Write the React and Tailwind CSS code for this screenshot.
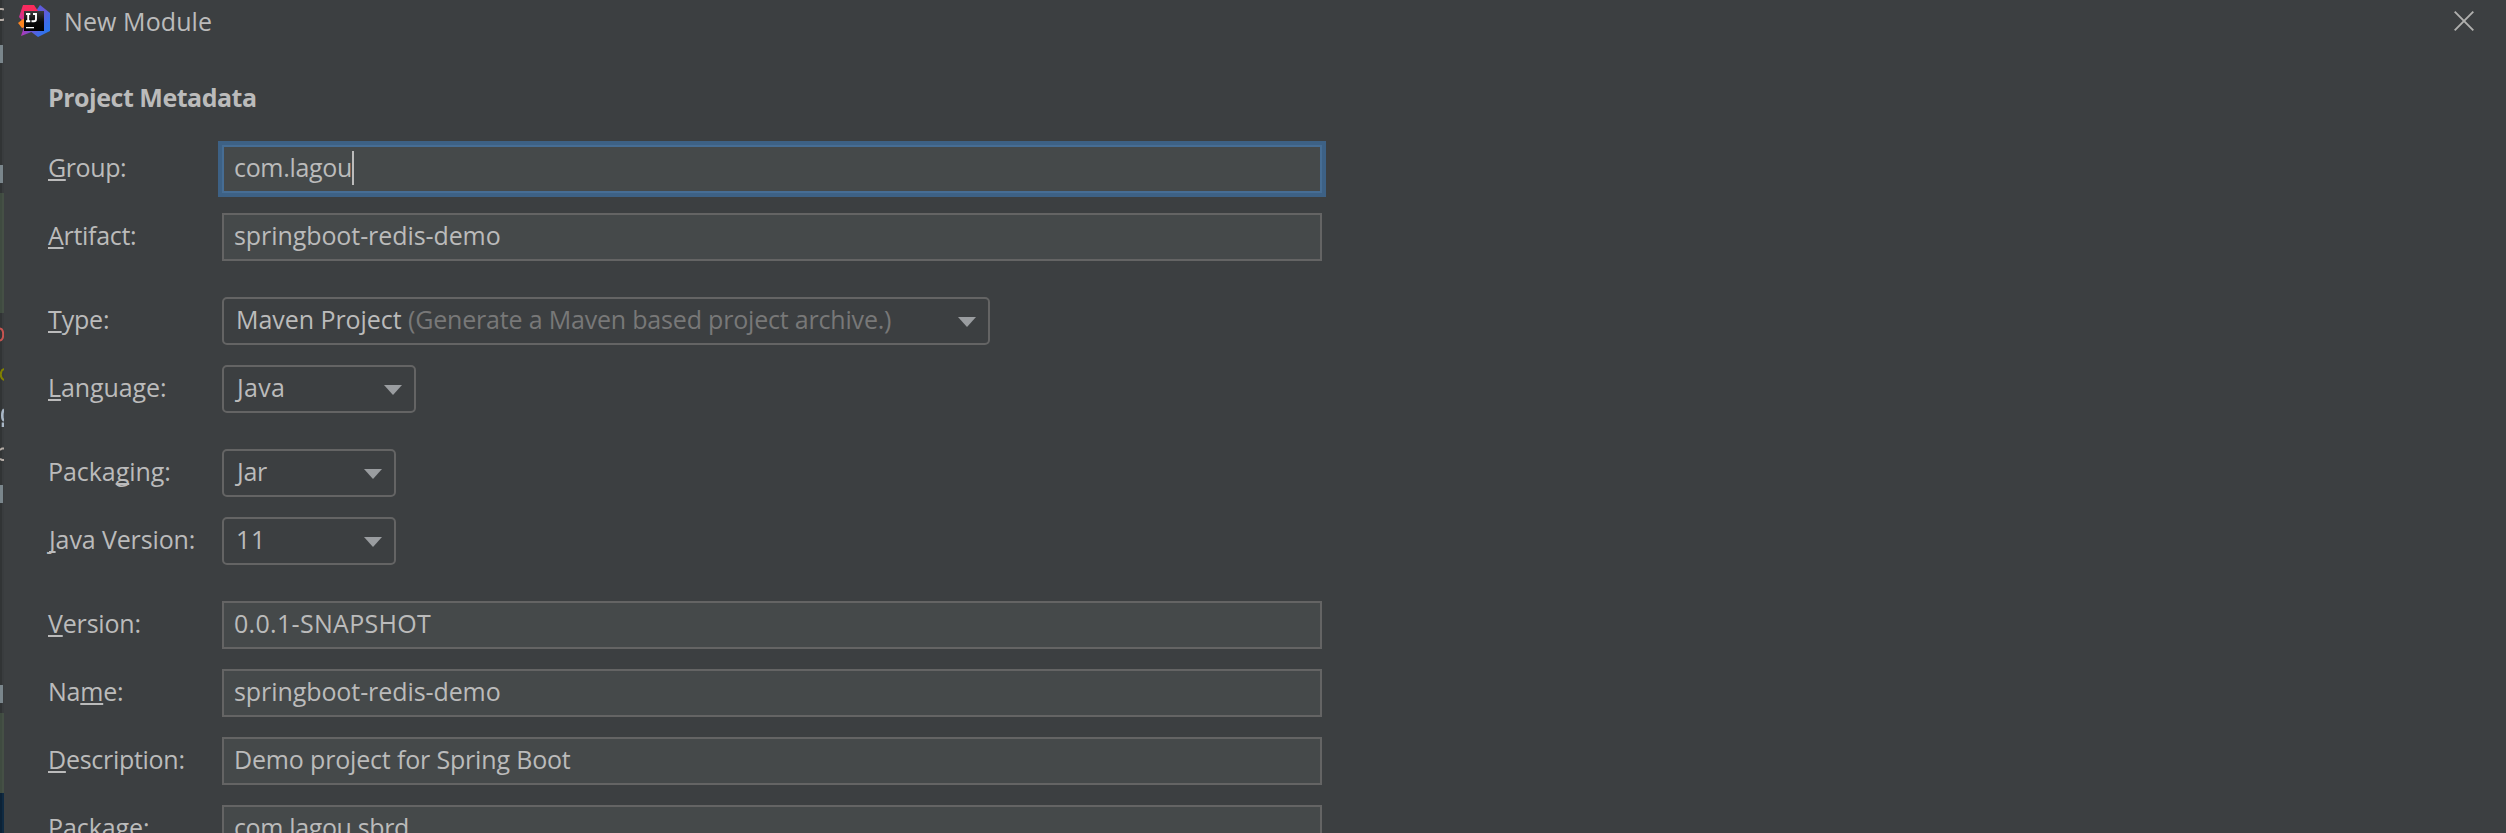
import React from "react";

function Mnemonic({ children, className = "" }) {
  return (
    <span
      className={`underline decoration-[#bbbbbb] decoration-2 underline-offset-[2px] [text-decoration-skip-ink:none] ${className}`}
    >
      {children}
    </span>
  );
}

function Row({ label, children, className = "" }) {
  return (
    <div className={`flex h-12 items-start ${className}`}>
      <label className="w-[174px] shrink-0 leading-[44px]">{label}</label>
      {children}
    </div>
  );
}

function TextField({ children, className = "" }) {
  return (
    <div
      className={`h-12 w-[1100px] border-2 border-[#646464] bg-[#45494a] pl-[10px] leading-[40px] ${className}`}
    >
      {children}
    </div>
  );
}

function FocusedField({ children, className = "" }) {
  return (
    <div
      className={`flex h-12 w-[1100px] border-2 border-[#466d94] bg-[#45494a] pl-[10px] leading-[40px] shadow-[0_0_0_4px_#3d6185] ${className}`}
    >
      {children}
      <span className="mt-1 h-[34px] w-[2px] bg-[#bbbbbb]" />
    </div>
  );
}

function Select({ children, className = "" }) {
  return (
    <div
      className={`flex h-12 items-start justify-between rounded-[5px] border-2 border-[#646464] pl-3 pr-3 leading-[40px] ${className}`}
    >
      <span>{children}</span>
      <svg width="18" height="10" viewBox="0 0 18 10" className="mt-[18px] shrink-0">
        <path d="M0 0H18L9 10Z" fill="#9a9da0" />
      </svg>
    </div>
  );
}

function EditorEdge() {
  return (
    <svg width="4" height="833" viewBox="0 0 4 833" className="shrink-0">
      <rect width="2" height="833" fill="#313435" />
      <rect x="2" width="2" height="833" fill="#393c3e" />
      <path d="M0 9H2Q3.500 9 4 10M0 20H3L4 19" stroke="#b4aca6" strokeWidth="2" fill="none" />
      <rect y="45" width="3" height="18" fill="#7a868c" />
      <rect y="165" width="3" height="18" fill="#7a868c" />
      <rect y="193" width="2" height="120" fill="#3f4b40" />
      <rect x="2" y="193" width="2" height="120" fill="#455045" />
      <path d="M0 328.500Q3.200 329 3.200 334.500T0 340.500" stroke="#c75450" strokeWidth="2" fill="none" />
      <path d="M4 369Q.8 370 .8 374.500T4 380" stroke="#808000" strokeWidth="2" fill="none" />
      <path d="M4 409.500Q2.300 411 2.300 415.500T4 420.500M3 422.500V427" stroke="#a9b7c6" strokeWidth="2.600" fill="none" />
      <path d="M0 450L2 448.500H4M0 459L2 460H4" stroke="#b4aca6" strokeWidth="2" fill="none" />
      <rect y="485" width="3" height="18" fill="#7a868c" />
      <rect y="685" width="3" height="18" fill="#7a868c" />
      <rect y="713" width="2" height="80" fill="#3f4b40" />
      <rect x="2" y="713" width="2" height="80" fill="#455045" />
      <rect y="793" width="2" height="40" fill="#0c2236" />
      <rect x="2" y="793" width="2" height="40" fill="#0f2a42" />
    </svg>
  );
}

function IdeaLogo() {
  return (
    <svg width="32" height="32" viewBox="0 0 32 32" className="shrink-0">
      <defs>
        <linearGradient id="blue" x1="0" y1="0" x2="1" y2="1">
          <stop offset="0" stopColor="#3b6be8" />
          <stop offset=".45" stopColor="#6a57d6" />
          <stop offset=".7" stopColor="#3a6de8" />
          <stop offset="1" stopColor="#1f7cf0" />
        </linearGradient>
        <linearGradient id="pink" x1="0" y1="1" x2="1" y2="0">
          <stop offset="0" stopColor="#a83bc0" />
          <stop offset=".5" stopColor="#f52a63" />
          <stop offset="1" stopColor="#fe2c55" />
        </linearGradient>
        <linearGradient id="purple" x1="0" y1="0" x2="1" y2="0">
          <stop offset="0" stopColor="#b336b4" />
          <stop offset="1" stopColor="#5a5be0" />
        </linearGradient>
        <linearGradient id="tile" x1="0" y1="0" x2="0" y2="1">
          <stop offset="0" stopColor="#3a3a3a" />
          <stop offset=".55" stopColor="#080808" />
          <stop offset="1" stopColor="#000000" />
        </linearGradient>
      </defs>
      <path d="M22 0L32 8V26L20 32L12 26L18 6Z" fill="url(#blue)" />
      <path d="M5 0H16L20 6L8 20L1 12Z" fill="url(#pink)" />
      <path d="M5 14L0 18L4 23L8 22V14Z" fill="#fb8420" />
      <path d="M6 22L3 31L16 26V22Z" fill="url(#purple)" />
      <rect x="6" y="6" width="20" height="20" fill="url(#tile)" />
      <path d="M8 9H12.300M10.200 8V17M8 16.300H12.300M15 9H18V14Q18 16.300 16 16.300H13.500" stroke="#fff" strokeWidth="1.900" fill="none" />
      <rect x="8" y="22" width="8" height="1.300" fill="#fff" />
    </svg>
  );
}

export default function App() {
  return (
    <div className="flex h-[833px] w-[2506px] overflow-hidden whitespace-pre bg-[#3c3f41] font-['Open_Sans','Noto_Sans',sans-serif] text-[25px] text-[#bbbbbb]">
      <EditorEdge />
      <div className="flex grow flex-col">
        <header className="flex h-[42px] items-start pl-[14px] pr-[32px]">
          <div className="mt-[5px] flex">
            <IdeaLogo />
          </div>
          <h1 className="ml-[14px] tracking-[0.090px] leading-[42px]">New Module</h1>
          <svg width="20" height="20" viewBox="0 0 20 20" className="ml-auto mt-[11px]">
            <path d="M.7 .7L19.300 19.300M19.300 .7L.7 19.300" stroke="#b0b0ae" strokeWidth="1.900" />
          </svg>
        </header>
        <main className="flex flex-col pl-[44px]">
          <h2 className="mt-[33px] h-[70px] font-bold leading-[44px] tracking-[-0.480px]">Project Metadata</h2>
          <div className="flex flex-col gap-9">
            <section className="flex flex-col gap-5">
              <Row className="tracking-[-0.410px]" label={<><Mnemonic>G</Mnemonic>roup:</>}>
                <FocusedField className="tracking-[-0.320px]">com.lagou</FocusedField>
              </Row>
              <Row className="tracking-[-0.300px]" label={<><Mnemonic>A</Mnemonic>rtifact:</>}>
                <TextField className="tracking-[-0.080px]">springboot-redis-demo</TextField>
              </Row>
            </section>
            <section className="flex flex-col gap-5">
              <Row className="tracking-[-0.160px]" label={<><Mnemonic>T</Mnemonic>ype:</>}>
                <Select className="w-[768px]">
                  <span className="tracking-[-0.050px]">Maven Project </span>
                  <span className="tracking-[-0.190px] text-[#787878]">(Generate a Maven based project archive.)</span>
                </Select>
              </Row>
              <Row className="tracking-[-0.090px]" label={<><Mnemonic>L</Mnemonic>anguage:</>}>
                <Select className="w-[194px] tracking-[0.300px]"><span className="pl-[1px]">Java</span></Select>
              </Row>
            </section>
            <section className="flex flex-col gap-5">
              <Row className="tracking-[-0.050px]" label={<>Packa<Mnemonic>g</Mnemonic>ing:</>}>
                <Select className="w-[174px] tracking-[-0.300px]"><span className="pl-[1px]">Jar</span></Select>
              </Row>
              <Row className="tracking-[-0.120px]" label={<span className="pl-[1px]"><Mnemonic>J</Mnemonic>ava Version:</span>}>
                <Select className="w-[174px] tracking-[0.700px]">11</Select>
              </Row>
            </section>
            <section className="flex flex-col gap-5">
              <Row className="tracking-[-0.180px]" label={<><Mnemonic>V</Mnemonic>ersion:</>}>
                <TextField className="tracking-[0.310px]">0.0.1-SNAPSHOT</TextField>
              </Row>
              <Row className="tracking-[-0.220px]" label={<>Na<Mnemonic>m</Mnemonic>e:</>}>
                <TextField className="tracking-[-0.080px]">springboot-redis-demo</TextField>
              </Row>
              <Row className="tracking-[-0.280px]" label={<><Mnemonic>D</Mnemonic>escription:</>}>
                <TextField className="tracking-[-0.170px]">Demo project for Spring Boot</TextField>
              </Row>
              <Row className="tracking-[-0.080px]" label={<>Pac<Mnemonic>k</Mnemonic>age:</>}>
                <TextField className="tracking-[-0.370px]">com.lagou.sbrd</TextField>
              </Row>
            </section>
          </div>
        </main>
      </div>
    </div>
  );
}
